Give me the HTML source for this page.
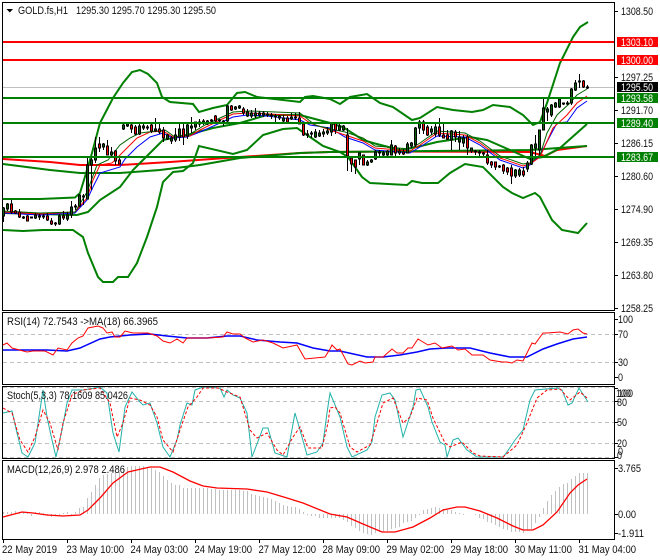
<!DOCTYPE html>
<html><head><meta charset="utf-8"><style>
html,body{margin:0;padding:0;background:#fff;width:660px;height:560px;overflow:hidden}
svg{display:block}
text{font:11px "Liberation Sans",sans-serif;fill:#111}
.w{fill:#fff}
.f{fill:none}
</style></head><body>
<svg width="660" height="560" viewBox="0 0 660 560" xmlns="http://www.w3.org/2000/svg">
<rect width="660" height="560" fill="#fff"/>
<!-- main levels -->
<path d="M3 87.5H614" stroke="#c0c0c0" fill="none"/>
<!-- big MAs -->
<polyline class="f" stroke="#f00" stroke-width="2" points="3,159 50,162 80,165 120,165 170,162 240,157 300,153 330,152 400,151.5 530,152 545,156 557,150 587,146"/>
<polyline class="f" stroke="#008000" stroke-width="2" points="3,164 50,170 80,173 120,173 160,170 200,165 240,158 300,153 330,152 530,150 587,146"/>
<!-- Bollinger -->
<g fill="none" stroke="#008000" stroke-width="2">
<polyline points="3,199 40,199 75,197.5 80,193 87,170 92,153 100,123 113,98 123,83 132,72 140,70 148,74 157,83 162,97 170,102 193,104 199,112 213,108 227,105 237,93 245,92 257,97 300,102 305,97 313,96 330,99 340,104 350,97 367,94 380,103 393,107 412,120 420,118 437,107 453,110 472,112 483,110 493,105 510,107 523,115 533,125 540,122 547,103 560,63 573,37 580,27 588,22"/>
<polyline points="3,213 40,214 77,215 88,212 100,200 120,187 133,170 140,163 153,150 163,140 177,137 187,135 213,128 240,123 267,115 300,115 330,123 343,127 363,140 373,143 400,150 417,147 437,142 470,137 487,140 510,150 530,159 543,157 560,148 587,124"/>
<polyline points="3,230 23,231 43,230 73,230 83,237 88,253 98,277 103,282 113,282 118,277 128,277 137,263 147,237 157,207 163,182 173,172 183,171 193,163 199,146 233,154 247,150 263,135 283,129 297,128 310,137 323,146 340,152 348,157 362,177 370,183 407,185 412,181 422,183 438,183 450,173 465,164 483,167 503,187 512,193 523,198 535,193 540,197 552,220 562,230 578,233 587,223"/>
</g>
<!-- small MAs -->
<polyline class="f" stroke="#00f" points="3,213 40,215 75,213 87,200 93,187 100,173 120,167 125,159 137,147 150,137 163,133 173,138 187,137 200,132 220,123 233,117 247,115 267,116 300,120 310,125 330,128 345,137 363,143 375,150 410,153 420,147 437,136 465,137 480,145 500,160 523,168 530,165 540,155 557,123 567,122 577,108 587,101"/>
<polyline class="f" stroke="#f00" points="3,212 40,214 75,212 87,198 93,180 100,165 112,163 125,150 137,138 150,132 163,131 173,137 190,136 200,130 220,120 233,114 247,113 270,114 300,116 310,123 330,130 345,135 363,141 375,148 410,151 420,145 437,133 465,135 480,143 500,158 523,166 530,164 540,157 553,128 567,115 577,103 587,96"/>
<polyline class="f" stroke="#006400" points="3,211 40,213 75,212 87,192 97,165 108,160 120,145 130,138 140,133 165,130 175,137 190,134 205,125 220,118 233,112 250,111 300,113 315,125 330,129 345,132 363,138 375,146 410,149 420,143 437,131 465,133 480,141 500,156 523,164 530,163 540,155 547,133 557,115 570,103 577,95 587,89"/>
<!-- wicks -->
<path stroke="#000" fill="none" d="M3.5 207V222M7.5 203V211M11.5 200V214M15.5 210V214M19.5 209V218M23.5 216V219M27.5 215V221M31.5 217V218M35.5 213V219M39.5 214V220M43.5 214V219M47.5 213V221M51.5 218V225M55.5 222V226M59.5 214V225M63.5 211V220M67.5 212V221M71.5 201V218M75.5 204V210M79.5 194V207M83.5 194V205M87.5 158V199M91.5 158V190M95.5 137V163M99.5 137V152M103.5 143V150M107.5 140V155M111.5 147V157M115.5 150V165M119.5 157V164M123.5 123V130M127.5 123V127M131.5 124V133M135.5 125V135M139.5 123V135M143.5 123V130M147.5 125V130M151.5 123V133M155.5 118V132M159.5 124V134M163.5 127V142M167.5 134V140M171.5 136V144M175.5 128V142M179.5 123V141M183.5 123V145M187.5 122V139M191.5 117V133M195.5 122V130M199.5 119V127M203.5 119V125M207.5 120V125M211.5 119V122M215.5 115V122M219.5 119V123M223.5 120V126M227.5 105V123M231.5 105V111M235.5 106V110M239.5 105V109M243.5 107V115M247.5 109V117M251.5 110V118M255.5 108V118M259.5 111V117M263.5 111V117M267.5 112V117M271.5 113V119M275.5 114V122M279.5 115V120M283.5 115V122M287.5 116V123M291.5 113V120M295.5 113V120M299.5 112V124M303.5 122V136M307.5 130V138M311.5 131V138M315.5 129V138M319.5 130V137M323.5 129V137M327.5 127V135M331.5 122V136M335.5 123V134M339.5 124V131M343.5 125V131M347.5 128V171M351.5 158V172M355.5 160V174M359.5 153V165M363.5 155V165M367.5 160V166M371.5 159V163M375.5 150V160M379.5 150V156M383.5 151V156M387.5 150V156M391.5 140V155M395.5 145V156M399.5 148V155M403.5 149V155M407.5 142V153M411.5 142V148M415.5 127V147M419.5 120V134M423.5 120V134M427.5 125V136M431.5 126V135M435.5 124V137M439.5 118V137M443.5 122V138M447.5 130V140M451.5 130V150M455.5 130V142M459.5 131V150M463.5 135V147M467.5 135V155M471.5 148V153M475.5 150V155M479.5 150V156M483.5 152V158M487.5 150V165M491.5 161V168M495.5 162V170M499.5 165V168M503.5 164V174M507.5 167V175M511.5 165V184M515.5 169V178M519.5 168V177M523.5 167V177M527.5 161V172M531.5 144V165M535.5 135V157M539.5 130V155M543.5 97V130M547.5 107V121M551.5 104V117M555.5 102V108M559.5 99V108M563.5 103V105M567.5 101V105M571.5 88V105M575.5 80V91M579.5 74V88M583.5 80V88M587.5 85V89"/>
<!-- bull bodies -->
<path stroke="#000" fill="#0a5f0a" d="M2.5 208h2v8h-2zM6.5 204h2v5h-2zM34.5 215h2v3h-2zM38.5 216h2v1h-2zM42.5 216h2v1h-2zM58.5 216h2v8h-2zM66.5 215h2v4h-2zM70.5 207h2v8h-2zM74.5 206h2v1h-2zM78.5 195h2v11h-2zM82.5 196h2v1h-2zM86.5 165h2v34h-2zM90.5 160h2v5h-2zM94.5 148h2v12h-2zM102.5 144h2v3h-2zM110.5 152h2v3h-2zM122.5 125h2v4h-2zM126.5 124h2v2h-2zM138.5 126h2v8h-2zM142.5 126h2v2h-2zM146.5 127h2v1h-2zM154.5 129h2v2h-2zM166.5 135h2v4h-2zM170.5 138h2v3h-2zM174.5 135h2v5h-2zM178.5 129h2v8h-2zM186.5 125h2v11h-2zM190.5 126h2v2h-2zM194.5 122h2v5h-2zM198.5 122h2v2h-2zM202.5 121h2v2h-2zM206.5 121h2v3h-2zM210.5 120h2v1h-2zM218.5 120h2v1h-2zM222.5 121h2v1h-2zM226.5 106h2v15h-2zM234.5 107h2v2h-2zM238.5 106h2v2h-2zM246.5 112h2v4h-2zM250.5 113h2v3h-2zM254.5 113h2v3h-2zM258.5 113h2v2h-2zM262.5 113h2v2h-2zM266.5 114h2v1h-2zM270.5 115h2v1h-2zM274.5 116h2v1h-2zM278.5 116h2v2h-2zM282.5 118h2v3h-2zM290.5 117h2v2h-2zM294.5 117h2v1h-2zM306.5 134h2v1h-2zM310.5 133h2v1h-2zM314.5 132h2v5h-2zM318.5 133h2v3h-2zM322.5 132h2v2h-2zM326.5 131h2v2h-2zM330.5 123h2v9h-2zM338.5 126h2v4h-2zM342.5 126h2v4h-2zM358.5 153h2v6h-2zM366.5 162h2v3h-2zM370.5 160h2v2h-2zM374.5 152h2v7h-2zM378.5 152h2v1h-2zM382.5 153h2v2h-2zM386.5 151h2v4h-2zM390.5 145h2v10h-2zM398.5 151h2v2h-2zM406.5 144h2v9h-2zM410.5 143h2v3h-2zM414.5 128h2v17h-2zM418.5 122h2v6h-2zM430.5 129h2v3h-2zM434.5 127h2v7h-2zM450.5 131h2v9h-2zM458.5 137h2v5h-2zM462.5 138h2v5h-2zM470.5 148h2v3h-2zM474.5 151h2v1h-2zM478.5 152h2v1h-2zM482.5 153h2v1h-2zM498.5 166h2v1h-2zM514.5 170h2v6h-2zM518.5 170h2v5h-2zM526.5 163h2v6h-2zM530.5 145h2v19h-2zM534.5 144h2v4h-2zM538.5 130h2v20h-2zM542.5 108h2v22h-2zM546.5 109h2v3h-2zM550.5 105h2v10h-2zM554.5 103h2v4h-2zM558.5 99h2v8h-2zM562.5 103h2v1h-2zM566.5 103h2v1h-2zM570.5 89h2v14h-2zM574.5 83h2v7h-2zM578.5 81h2v1h-2zM586.5 87h2v1h-2z"/>
<!-- bear bodies -->
<path stroke="#000" fill="#f00" d="M10.5 204h2v8h-2zM14.5 211h2v2h-2zM18.5 212h2v5h-2zM22.5 217h2v1h-2zM26.5 216h2v5h-2zM30.5 217h2v1h-2zM46.5 216h2v4h-2zM50.5 221h2v3h-2zM54.5 223h2v1h-2zM62.5 216h2v2h-2zM98.5 144h2v4h-2zM106.5 146h2v9h-2zM114.5 151h2v10h-2zM118.5 160h2v4h-2zM130.5 125h2v4h-2zM134.5 127h2v7h-2zM150.5 125h2v6h-2zM158.5 129h2v3h-2zM162.5 130h2v8h-2zM182.5 129h2v8h-2zM214.5 116h2v5h-2zM230.5 106h2v4h-2zM242.5 109h2v4h-2zM286.5 118h2v4h-2zM298.5 118h2v6h-2zM302.5 124h2v11h-2zM334.5 123h2v7h-2zM346.5 135h2v21h-2zM350.5 158h2v6h-2zM354.5 160h2v7h-2zM362.5 155h2v10h-2zM394.5 146h2v7h-2zM402.5 152h2v2h-2zM422.5 122h2v8h-2zM426.5 127h2v8h-2zM438.5 127h2v8h-2zM442.5 135h2v3h-2zM446.5 135h2v4h-2zM454.5 132h2v5h-2zM466.5 137h2v11h-2zM486.5 155h2v8h-2zM490.5 162h2v3h-2zM494.5 162h2v5h-2zM502.5 165h2v6h-2zM506.5 168h2v4h-2zM510.5 168h2v8h-2zM522.5 171h2v4h-2zM582.5 81h2v6h-2z"/>
<path stroke="#f00" stroke-width="2" fill="none" d="M3 42H614M3 60H614"/>
<path stroke="#008000" stroke-width="2" fill="none" d="M3 98H614M3 123H614M3 157H614"/>

<!-- RSI -->
<path stroke="#c0c0c0" fill="none" stroke-dasharray="4 3" d="M3 334.5H614M3 362.5H614"/>
<polyline class="f" stroke="#00f" stroke-width="1.5" points="3,350 47,350 67,351 80,348 100,339 110,337 130,335 150,334 167,336 187,338 207,338 227,336 240,336 257,340 280,342 297,343 313,348 330,351 340,351 367,357 383,357 400,355 417,352 430,349 447,348 470,348 490,353 510,357 527,357 543,349 557,344 573,339 587,337"/>
<polyline class="f" stroke="#f00" points="3,345 7,343 12,348 27,352 33,351 45,351 53,355 58,348 67,350 72,343 78,338 83,336 88,328 98,326 103,328 107,333 112,332 115,337 120,337 125,331 133,333 148,333 157,336 163,341 170,343 177,339 183,343 187,338 207,338 223,337 227,332 233,334 240,334 245,338 253,342 263,340 273,343 283,348 297,345 305,359 315,358 325,357 330,349 332,345 337,350 340,349 348,364 352,365 360,361 365,363 373,362 375,357 383,357 392,349 397,353 403,353 408,348 412,348 418,339 428,345 435,343 442,348 452,346 458,350 465,349 472,355 483,355 490,360 502,362 507,362 512,363 517,360 523,361 532,343 535,344 543,333 547,333 560,332 568,334 573,330 578,329 583,333 587,334"/>

<!-- Stoch -->
<path stroke="#c0c0c0" fill="none" stroke-dasharray="4 3" d="M3 387.5H614M3 401.5H614M3 422.5H614M3 443.5H614M3 457.5H614"/>
<polyline class="f" stroke="#20b2aa" points="3,413 12,411 17,433 22,453 28,457 35,443 40,410 43,390 47,417 52,440 56,457 62,430 67,403 72,390 83,390 100,387 107,393 113,433 119,452 125,407 132,392 140,402 143,405 150,403 157,423 163,447 170,457 177,440 180,425 187,403 192,405 195,390 203,387 220,388 224,397 227,390 233,395 240,398 247,413 252,457 263,428 268,428 275,453 287,457 295,413 300,430 307,455 317,452 323,443 327,413 330,393 333,400 340,417 347,447 352,457 367,450 372,442 375,417 382,395 390,393 395,400 403,437 413,407 416,390 420,389 428,407 432,422 440,442 445,445 447,457 453,440 458,438 467,450 477,457 503,457 507,452 515,440 523,430 530,400 535,390 557,388 562,390 568,405 572,403 579,388 588,402"/>
<polyline class="f" stroke="#f00" stroke-dasharray="3 2" points="3,408 12,413 20,440 28,452 35,437 43,410 50,423 58,450 63,423 72,395 83,390 100,388 110,403 117,437 123,423 130,398 140,400 150,405 157,417 163,440 173,452 180,430 188,407 197,397 203,388 218,388 227,392 240,397 250,430 257,438 267,433 277,450 283,455 293,437 300,427 308,448 322,448 328,423 330,408 335,407 340,413 350,447 357,452 370,445 377,423 383,403 393,398 403,423 410,417 417,398 427,400 433,418 445,443 450,447 462,442 473,453 480,456 503,457 517,445 527,423 537,398 547,390 560,389 570,400 580,392 587,398"/>

<!-- MACD -->
<path stroke="#c0c0c0" fill="none" d="M3.5 514V512M7.5 514V512M11.5 514V512M15.5 514V511M19.5 514V512M23.5 514V512M27.5 514V513M31.5 514V516M35.5 514V512M39.5 514V512M43.5 514V513M47.5 514V516M51.5 514V517M55.5 514V516M59.5 514V516M63.5 514V513M67.5 514V512M71.5 514V515M75.5 514V512M79.5 514V508M83.5 514V507M87.5 514V498M91.5 514V492M95.5 514V485M99.5 514V478M103.5 514V475M107.5 514V474M111.5 514V473M115.5 514V472M119.5 514V472M123.5 514V469M127.5 514V467M131.5 514V466M135.5 514V466M139.5 514V466M143.5 514V466M147.5 514V467M151.5 514V468M155.5 514V470M159.5 514V472M163.5 514V476M167.5 514V480M171.5 514V483M175.5 514V485M179.5 514V485M183.5 514V488M187.5 514V488M191.5 514V488M195.5 514V488M199.5 514V488M203.5 514V488M207.5 514V488M211.5 514V489M215.5 514V489M219.5 514V490M223.5 514V490M227.5 514V490M231.5 514V490M235.5 514V490M239.5 514V490M243.5 514V491M247.5 514V491M251.5 514V494M255.5 514V495M259.5 514V496M263.5 514V497M267.5 514V498M271.5 514V499M275.5 514V501M279.5 514V503M283.5 514V505M287.5 514V506M291.5 514V507M295.5 514V507M299.5 514V509M303.5 514V512M307.5 514V515M311.5 514V516M315.5 514V516M319.5 514V518M323.5 514V518M327.5 514V518M331.5 514V518M335.5 514V518M339.5 514V518M343.5 514V520M347.5 514V522M351.5 514V526M355.5 514V528M359.5 514V531M363.5 514V533M367.5 514V534M371.5 514V535M375.5 514V533M379.5 514V532M383.5 514V532M387.5 514V531M391.5 514V529M395.5 514V528M399.5 514V527M403.5 514V523M407.5 514V522M411.5 514V521M415.5 514V518M419.5 514V515M423.5 514V510M427.5 514V509M431.5 514V508M435.5 514V507M439.5 514V508M443.5 514V509M447.5 514V510M451.5 514V510M455.5 514V512M459.5 514V513M463.5 514V515M475.5 514V515M479.5 514V518M483.5 514V519M487.5 514V522M491.5 514V523M495.5 514V525M499.5 514V527M503.5 514V529M507.5 514V530M511.5 514V532M515.5 514V532M519.5 514V532M523.5 514V533M527.5 514V530M531.5 514V529M535.5 514V523M539.5 514V517M543.5 514V508M547.5 514V501M551.5 514V495M555.5 514V491M559.5 514V487M563.5 514V484M567.5 514V483M571.5 514V479M575.5 514V476M579.5 514V473M583.5 514V473M587.5 514V473"/>
<polyline class="f" stroke="#f00" stroke-width="1.3" points="3,517 22,512 33,513 47,515 63,516 80,515 88,510 100,498 113,483 128,472 150,467 160,467 173,472 190,481 203,486 217,488 247,489 267,492 287,498 303,503 330,514 347,517 363,524 382,532 395,532 413,527 430,518 443,510 457,507 465,507 480,511 497,518 513,526 523,530 533,530 543,525 557,512 570,493 578,485 587,479"/>

<!-- frames -->
<g fill="none" stroke="#000">
<rect x="2.5" y="2.5" width="612" height="308"/>
<rect x="2.5" y="312.5" width="612" height="72"/>
<rect x="2.5" y="386.5" width="612" height="72"/>
<rect x="2.5" y="460.5" width="612" height="79"/>
<path d="M614 11.5h4M614 77.5h4M614 110.5h4M614 143.5h4M614 176.5h4M614 209.5h4M614 242.5h4M614 275.5h4M614 308.5h4M614 319.5h4M614 334.5h4M614 362.5h4M614 377.5h4M614 388.5h4M614 401.5h4M614 422.5h4M614 443.5h4M614 457.5h4M614 468.5h4M614 514.5h4M614 533.5h4"/>
<path d="M3.5 539v4M67.5 539v4M131.5 539v4M195.5 539v4M259.5 539v4M323.5 539v4M387.5 539v4M451.5 539v4M515.5 539v4M579.5 539v4"/>
</g>

<!-- price labels -->
<rect x="617" y="37" width="41" height="10" fill="#f00"/>
<rect x="617" y="55" width="41" height="10" fill="#f00"/>
<rect x="617" y="82" width="41" height="10" fill="#000"/>
<rect x="617" y="93" width="41" height="10" fill="#008000"/>
<rect x="617" y="118" width="41" height="10" fill="#008000"/>
<rect x="617" y="152" width="41" height="10" fill="#008000"/>
<path d="M6.5 9h6.5l-3.2 3.5z" fill="#000"/>

<text x="18" y="14" textLength="50" lengthAdjust="spacingAndGlyphs">GOLD.fs,H1</text>
<text x="76" y="14" textLength="140" lengthAdjust="spacingAndGlyphs">1295.30 1295.70 1295.30 1295.50</text>

<g>
<text x="621" y="15" textLength="32" lengthAdjust="spacingAndGlyphs">1308.50</text>
<text class="w" x="621" y="46" textLength="32" lengthAdjust="spacingAndGlyphs">1303.10</text>
<text class="w" x="621" y="64" textLength="32" lengthAdjust="spacingAndGlyphs">1300.00</text>
<text x="621" y="81" textLength="32" lengthAdjust="spacingAndGlyphs">1297.25</text>
<text class="w" x="621" y="91" textLength="32" lengthAdjust="spacingAndGlyphs">1295.50</text>
<text class="w" x="621" y="102" textLength="32" lengthAdjust="spacingAndGlyphs">1293.58</text>
<text x="621" y="114" textLength="32" lengthAdjust="spacingAndGlyphs">1291.70</text>
<text class="w" x="621" y="127" textLength="32" lengthAdjust="spacingAndGlyphs">1289.40</text>
<text x="621" y="147" textLength="32" lengthAdjust="spacingAndGlyphs">1286.15</text>
<text class="w" x="621" y="161" textLength="32" lengthAdjust="spacingAndGlyphs">1283.67</text>
<text x="621" y="180" textLength="32" lengthAdjust="spacingAndGlyphs">1280.60</text>
<text x="621" y="213" textLength="32" lengthAdjust="spacingAndGlyphs">1274.90</text>
<text x="621" y="246" textLength="32" lengthAdjust="spacingAndGlyphs">1269.35</text>
<text x="621" y="279" textLength="32" lengthAdjust="spacingAndGlyphs">1263.80</text>
<text x="621" y="312" textLength="32" lengthAdjust="spacingAndGlyphs">1258.25</text>

<text x="618" y="323" textLength="15" lengthAdjust="spacingAndGlyphs">100</text>
<text x="618" y="338" textLength="10" lengthAdjust="spacingAndGlyphs">70</text>
<text x="618" y="366" textLength="10" lengthAdjust="spacingAndGlyphs">30</text>
<text x="618" y="381" textLength="5" lengthAdjust="spacingAndGlyphs">0</text>

<text x="618" y="397" textLength="15" lengthAdjust="spacingAndGlyphs">100</text>
<text x="616" y="397" textLength="15" lengthAdjust="spacingAndGlyphs">100</text>
<text x="617" y="406" textLength="10" lengthAdjust="spacingAndGlyphs">80</text>
<text x="617" y="426" textLength="10" lengthAdjust="spacingAndGlyphs">50</text>
<text x="617" y="447" textLength="10" lengthAdjust="spacingAndGlyphs">20</text>
<text x="618" y="455" textLength="5" lengthAdjust="spacingAndGlyphs">0</text>
<text x="617" y="459" textLength="5" lengthAdjust="spacingAndGlyphs">0</text>

<text x="618" y="472" textLength="23" lengthAdjust="spacingAndGlyphs">3.765</text>
<text x="618" y="518" textLength="18" lengthAdjust="spacingAndGlyphs">0.00</text>
<text x="618" y="537" textLength="26" lengthAdjust="spacingAndGlyphs">-1.911</text>
</g>

<text x="7" y="325" textLength="151" lengthAdjust="spacingAndGlyphs">RSI(14) 72.7543  -&gt;MA(18) 66.3965</text>
<text x="7" y="399" textLength="121" lengthAdjust="spacingAndGlyphs">Stoch(5,3,3) 78.1609 85.0426</text>
<text x="7" y="473" textLength="118" lengthAdjust="spacingAndGlyphs">MACD(12,26,9) 2.978 2.486</text>

<g>
<text x="2" y="553" textLength="55" lengthAdjust="spacingAndGlyphs">22 May 2019</text>
<text x="66.5" y="553" textLength="57.5" lengthAdjust="spacingAndGlyphs">23 May 10:00</text>
<text x="130.5" y="553" textLength="57.5" lengthAdjust="spacingAndGlyphs">24 May 03:00</text>
<text x="194.5" y="553" textLength="57.5" lengthAdjust="spacingAndGlyphs">24 May 19:00</text>
<text x="258.5" y="553" textLength="57.5" lengthAdjust="spacingAndGlyphs">27 May 12:00</text>
<text x="322.5" y="553" textLength="57.5" lengthAdjust="spacingAndGlyphs">28 May 09:00</text>
<text x="386.5" y="553" textLength="57.5" lengthAdjust="spacingAndGlyphs">29 May 02:00</text>
<text x="450.5" y="553" textLength="57.5" lengthAdjust="spacingAndGlyphs">29 May 18:00</text>
<text x="514.5" y="553" textLength="57.5" lengthAdjust="spacingAndGlyphs">30 May 11:00</text>
<text x="578.5" y="553" textLength="57.5" lengthAdjust="spacingAndGlyphs">31 May 04:00</text>
</g>
</svg>
</body></html>
